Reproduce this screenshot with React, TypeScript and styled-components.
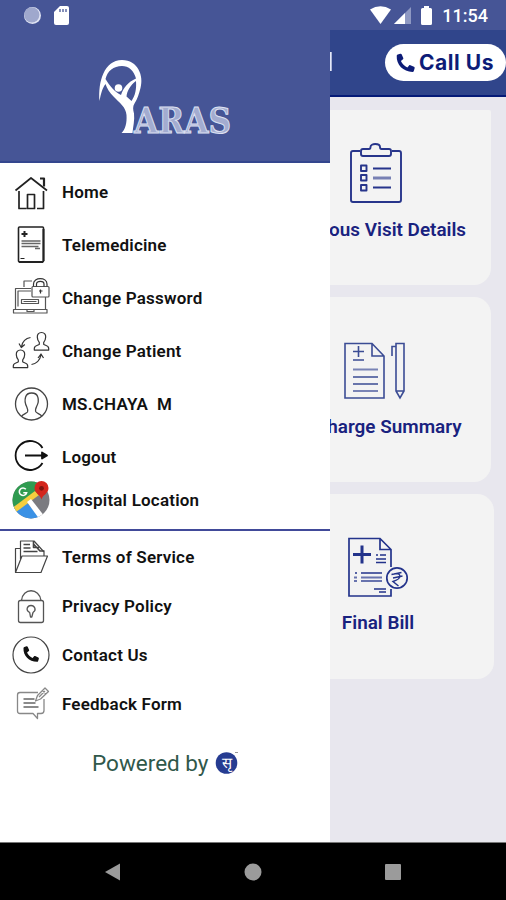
import React from "react";
import styled, { createGlobalStyle } from "styled-components";

const Global = createGlobalStyle`
  * { box-sizing: border-box; }
  body { margin: 0; background: #e8e7ee; font-family: Roboto, "Liberation Sans", sans-serif; }
  svg { display: block; flex: none; }
`;

const Screen = styled.div`
  width: 506px;
  height: 900px;
  display: flex;
  flex-direction: column;
  overflow: hidden;
  background: #e8e7ee;
`;

const StatusBar = styled.header`
  height: 30px;
  flex: none;
  display: flex;
  justify-content: space-between;
  align-items: center;
  padding: 0 18px 0 23px;
  background: #465596;
  color: #fff;
`;

const StatusGroup = styled.div<{ $gap: number }>`
  display: flex;
  align-items: center;
  gap: ${(p) => p.$gap}px;
`;

const Clock = styled.span`
  font-size: 18px;
  line-height: 30px;
  font-weight: 500;
  margin: 1px 0 0 3px;
`;

const Body = styled.div`
  position: relative;
  flex: 1;
  display: flex;
  flex-direction: column;
  overflow: hidden;
`;

const AppBar = styled.div`
  height: 67px;
  flex: none;
  display: flex;
  align-items: center;
  justify-content: flex-end;
  gap: 52px;
  background: #30458b;
  border-bottom: 2px solid #051a78;
`;

const AppTitle = styled.h1`
  margin: 0;
  font-size: 25px;
  font-weight: 500;
  color: #e4e8f8;
  will-change: transform;
`;

const CallButton = styled.button`
  display: flex;
  align-items: center;
  gap: 4px;
  width: 121px;
  height: 37px;
  padding: 0 0 0 10px;
  border: 0;
  border-radius: 19px;
  background: #fff;
  color: #0d1c77;
  font: 700 21px Inter, sans-serif;
  letter-spacing: 0.55px;
  white-space: nowrap;
`;

const Cards = styled.main`
  display: flex;
  flex-direction: column;
  align-items: flex-end;
  gap: 12px;
  padding: 13px 12px 0 0;
`;

const Card = styled.section<{ $kind: "top" | "middle" | "last" }>`
  width: 230px;
  height: ${(p) => (p.$kind === "top" ? 175 : 185)}px;
  margin-right: ${(p) => (p.$kind === "last" ? 0 : 3)}px;
  display: flex;
  flex-direction: column;
  align-items: center;
  padding: ${(p) => ({ top: "32px 0 0", middle: "44px 0 0", last: "43px 2px 0 0" })[p.$kind]};
  border-radius: ${(p) => (p.$kind === "top" ? "2px 2px 17px 17px" : "17px")};
  background: #f3f3f3;
`;

const CardLabel = styled.div`
  margin-top: 14px;
  font-size: 18.9px;
  line-height: 24px;
  font-weight: 600;
  color: #19227f;
  white-space: nowrap;
`;

const Drawer = styled.aside`
  position: absolute;
  inset: 0 auto 0 0;
  width: 329.5px;
  background: #fff;
`;

const Brand = styled.div`
  height: 133px;
  padding: 28px 0 0 96px;
  background: #465596;
  border-bottom: 2px solid #34468e;
`;

const Menu = styled.nav<{ $divided?: boolean }>`
  display: flex;
  flex-direction: column;
  padding: ${(p) => (p.$divided ? "1px 0 0" : "2px 0 13px")};
  border-top: ${(p) => (p.$divided ? "2px solid #414a99" : "0")};
`;

const Item = styled.a<{ $h: number }>`
  height: ${(p) => p.$h}px;
  display: flex;
  align-items: center;
  gap: 11px;
  padding-left: 11px;
  color: #111;
  font-size: 17px;
  font-weight: 600;
  letter-spacing: 0.2px;
  white-space: pre;
`;

const Powered = styled.footer`
  display: flex;
  align-items: center;
  gap: 6px;
  padding: 21px 0 0 92px;
  color: #30584a;
  font-size: 22.500px;
  line-height: 28px;
`;

const NavBar = styled.footer`
  height: 58px;
  flex: none;
  display: grid;
  grid-template-columns: repeat(3, 140px);
  justify-content: center;
  justify-items: center;
  align-items: center;
  background: #000;
  border-top: 1px solid #777;
`;

const Line = ({ children, w = 1.3, c = "#222" }: { children: React.ReactNode; w?: number; c?: string }) => (
  <svg width="40" height="40" viewBox="0 0 40 40" fill="none" stroke={c} strokeWidth={w} strokeLinejoin="round">
    {children}
  </svg>
);

const HANDSET =
  "M3 1.2 5.8.3c.7-.2 1.2.1 1.5.7l1.800 4c.2.6.1 1-.3 1.400L6.500 8.300c1.400 3.200 3.900 5.700 7.100 7.200l1.900-2.300c.4-.5.9-.6 1.400-.3l4 1.800c.6.3.9.8.7 1.500l-.9 3c-.2.7-.7 1.100-1.400 1.100C9 20.300 1.300 12.500 1.900 2.600 1.900 1.900 2.300 1.400 3 1.200Z";

const BUST =
  "M7 0c3 0 4.300 2 4.200 4.600-.1 2.300-.8 4-2 5.200v2.100c1.500 1.200 5 1 5 4v1.700H-.2v-1.700c0-3 3.500-2.800 5-4V9.800c-1.200-1.200-1.900-2.900-2-5.200C2.700 2 4 0 7 0Z";

const icons = {
  home: (
    <Line w={1.7}>
      <path d="M4.500 18.500 20 6 36 18.500M8 19v17.500h7.500M26 36.500h6.500V19M16.500 36.500V22.500h7v14Z" />
      <path d="M29 6.500h4v8" strokeWidth="2.200" />
    </Line>
  ),
  tele: (
    <Line w={1.6}>
      <rect x="7.500" y="2" width="25" height="35" rx="1" />
      <path d="M32.500 4v32M8 37h24" strokeWidth="2" />
      <path d="M10.500 9h6M13.500 6v6" strokeWidth="2" />
      <path d="M10.500 16h19M10.500 18.500h19M10.500 21.500h17M24 23.500h5" stroke="#666" />
      <path d="M9.500 33.500h4" strokeWidth="1" />
    </Line>
  ),
  password: (
    <Line w={1.2} c="#555">
      <path d="M20 10.500H4.500v21h30V19M7 28.500V13h13M2.500 31.500h33.500v3.500H2.500ZM16 32v1.500h7V32M13 9V3h8" />
      <path d="M10.500 21.500h17v4h-17ZM12.500 23.500h13" />
      <rect x="21" y="8.500" width="17" height="10.500" rx="1" fill="#fff" />
      <path d="M22.500 8.500V6c0-7.200 13.500-7.200 13.500 0v2.500M25.500 8.500V6c0-3.500 7.500-3.500 7.500 0v2.500M29.500 11.500v4M28 13h3.500" stroke="#333" />
    </Line>
  ),
  patient: (
    <Line w={1.2} c="#333">
      <g transform="translate(2.500 19)"><path d={BUST} /></g>
      <g transform="translate(23.500 1.500)"><path d={BUST} /></g>
      <path d="M19.500 6.500c-5 .8-8 4-9 9M8 12.500l2.300 4 3.500-3M20.500 33.500c5-1 8.500-4.500 9.500-9.500M27 27l3-4 2.500 4" />
    </Line>
  ),
  user: (
    <Line c="#444">
      <circle cx="20.500" cy="20" r="16" />
      <path d="M10.500 32.500c1.500-2.500 5-3 6-4.500.7-1.500.2-3-.7-5-2.300-4.500-2-7.500-1.200-10 .8-2.700 3-4 6-4s5.500 1.500 6.200 4c.8 2.500.7 6-1.200 9.500-1 2-1.500 4-.6 5.500 1 1.500 4.500 2 6 4.500" />
    </Line>
  ),
  logout: (
    <Line w={1.8} c="#111">
      <path d="M31.500 11A14.500 14.500 0 1 0 31.500 26M14 18.500h21" />
      <path d="m31 15.500 5 3-5 3Z" fill="#111" />
    </Line>
  ),
  map: (
    <svg width="40" height="40" viewBox="0 0 40 40">
      <defs><clipPath id="disc"><circle cx="20" cy="20" r="18.500" /></clipPath></defs>
      <g clipPath="url(#disc)">
        <path d="M0 0h40v40H0Z" fill="#7b7b80" />
        <path d="M0 0h28v12L0 32Z" fill="#2f9b50" />
        <path d="m0 28 14-7 18 19H0Z" fill="#3a91e5" />
        <path d="m0 29 24-18 4 4L1 35Z" fill="#f5ce3e" />
        <path d="m16 22 4-3 14 18-5 3Z" fill="#fff" />
      </g>
      <path d="M14.800 9.300a3.700 3.700 0 1 0 .8 3.400h-3.300" fill="none" stroke="#fff" strokeWidth="1.600" />
      <path d="M30.500 19.500c-1-4.500-7-6-7-11.500a7 7 0 0 1 14 0c0 5.500-6 7-7 11.500Z" fill="#d3251c" />
      <circle cx="30.500" cy="8.300" r="2.400" fill="#7e1410" />
    </svg>
  ),
  folder: (
    <Line c="#444" w={1.2}>
      <path d="M4.500 35.500V11.500h5M4.500 35.500 11 19h25.500l-6.500 16.500H6ZM9.500 22V4H23l10 11v4" />
      <path d="M22.500 4v6.500h5.500M22.500 7l6.500 7h4.500M12.500 7.500h6.500M12.500 11h7M12.500 14.500h14" strokeWidth="1.600" />
    </Line>
  ),
  lock: (
    <Line c="#555">
      <rect x="7.500" y="14.500" width="25" height="22" rx="2" />
      <path d="M10.500 14.500C11.500 1.500 28.500 1.500 30 14.500" />
      <path d="M18.700 26.500C14 24 16.500 19.500 20 19.500s6 4.500 2 7L20.800 31h-1.300Z" />
    </Line>
  ),
  contact: (
    <Line c="#444" w={1.2}>
      <circle cx="20" cy="20" r="18" />
      <g transform="translate(11 11) scale(.78)"><path d={HANDSET} fill="#111" stroke="none" /></g>
    </Line>
  ),
  feedback: (
    <Line c="#888">
      <path d="M27 8.500H9Q6.500 8.500 6.500 11v16Q6.500 29.500 9 29.500h13l4.500 5v-5h3.500q3 0 3-3V15" />
      <path d="M12.500 15h11M12.500 19h12M12.500 23h15" stroke="#666" />
      <path d="m24.500 17 2-5.500L34 4l3.500 3.500-8 7.500ZM31.500 6.500l3 3M28 13l6-6" />
    </Line>
  ),
};

const primary: [keyof typeof icons, string, number][] = [
  ["home", "Home", 53],
  ["tele", "Telemedicine", 53],
  ["password", "Change Password", 53],
  ["patient", "Change Patient", 53],
  ["user", "MS.CHAYA  M", 53],
  ["logout", "Logout", 53],
  ["map", "Hospital Location", 33],
];

const secondary: [keyof typeof icons, string][] = [
  ["folder", "Terms of Service"],
  ["lock", "Privacy Policy"],
  ["contact", "Contact Us"],
  ["feedback", "Feedback Form"],
];

const Logo = () => (
  <svg width="140" height="80" viewBox="96 58 140 80">
    <path
      fillRule="evenodd"
      d="M99.500 101C98 82 104 60 122 60c16 0 22 16 18.500 28-1.500 6-3 11-6 15.500-2 3-1.500 6-.5 10 .8 7-1 13-1.500 19.500h-11c4-4 5.500-10 5-18-.5-8-7-12-13-18.500-4-4-6.500-8-8-12.500-3 4-4.500 9-6 17ZM105.500 79c4 7 9.500 13 15.500 16 2-7 7-13 15-16.500-2-8-7.500-12.500-14-12.500-8.500 0-14.500 5-16.500 13ZM136 81c-5.500 4-9 10-9.500 15.500l5 4.500c4-6 5-12 4.500-20Z"
      fill="#fff"
    />
    <circle cx="118.500" cy="88" r="3.800" fill="#fff" />
    <text
      x="134" y="133" textLength="97" lengthAdjust="spacingAndGlyphs"
      fontFamily="DejaVu Serif" fontWeight="700" fontSize="36"
      fill="#a3acd0" stroke="#dde1f2" strokeWidth="1"
    >ARAS</text>
  </svg>
);

const ClipboardArt = () => (
  <svg width="54" height="62" viewBox="0 0 54 62" fill="none" stroke="#27358b" strokeWidth="1.900" strokeLinejoin="round">
    <path d="M11 9H4q-2 0-2 2v47q0 2 2 2h46q2 0 2-2V11q0-2-2-2h-7" />
    <path d="M14 7h6q1.500 0 1.500-2c0-4 9.500-4 9.500 0q0 2 1.500 2H40q2 0 2 2v3q0 2-2 2H14q-2 0-2-2V9q0-2 2-2Z" />
    <path d="M12 23.500h5.500V29H12ZM12 33h5.500v5.500H12ZM12 43h5.500v5.500H12ZM24 26.500h18M24 45.500h18" />
    <path d="M24 36h18" stroke="#7881b4" strokeWidth="3" />
  </svg>
);

const SummaryArt = () => (
  <svg width="64" height="60" viewBox="1 0 64 60" fill="none" stroke="#3b4c94" strokeWidth="1.600">
    <path d="M2 2.500h27L41 15v42H2ZM29 2.500V15h12M10 10.500h11M15.500 5v11M10 19h11M10 36h25M10 43h25" />
    <path d="M10 28.500h25M10 50h25" stroke="#7983b5" strokeWidth="2" />
    <path d="M53 2.500h8V50l-4 7-4-7ZM53 50h8M53 5.500h-4V15" />
  </svg>
);

const BillArt = () => (
  <svg width="62" height="60" viewBox="0 0 62 60" fill="none" stroke="#23338b" strokeWidth="1.700">
    <path d="M44 30V12.500L33 1.500H2V59h42v-7M33 1.500v11h11" />
    <path d="M6 17.500h18M15 8.500v18" strokeWidth="3" />
    <path d="M29 18h2M33 18h6M29 22h10M29 25.500h10M8 36h2M14 36h21M27 52h12M32 55h7" />
    <path d="M7 40.500h3M14 40.500h21M7 44h3M14 44h21" stroke="#6873ae" strokeWidth="2" />
    <circle cx="50" cy="41" r="10.200" fill="#f3f3f3" />
    <path d="m44.500 37.500 10-2M46 41l9.500-2M47 37c7-2 9 4.500-1 7.500l5.500 4.500" strokeWidth="1.400" />
  </svg>
);

export default function App() {
  return (
    <>
      <Global />
      <Screen>
        <StatusBar>
          <StatusGroup $gap={12}>
            <svg width="19" height="19" viewBox="0 0 19 19">
              <circle cx="9.500" cy="9.500" r="8.500" fill="#dfe3f3" />
              <circle cx="8.800" cy="8.800" r="7.600" fill="#9fa8cd" />
            </svg>
            <svg width="15" height="19" viewBox="0 0 15 19">
              <path d="M6 0h7q2 0 2 2v15q0 2-2 2H2q-2 0-2-2V6Z" fill="#fff" />
              <path d="M6 3v3M9 3v3M12 3v3" stroke="#465596" strokeWidth="1.300" />
            </svg>
          </StatusGroup>
          <StatusGroup $gap={3}>
            <svg width="21" height="18" viewBox="0 0 21 18">
              <path d="M0 3.500Q10.500-3 21 3.500L10.500 18Z" fill="#fff" />
            </svg>
            <svg width="17" height="17" viewBox="0 0 17 17">
              <path d="M17 0v17H0Z" fill="#8e98c2" />
              <path d="M11 6v11H0Z" fill="#fff" />
            </svg>
            <svg width="22" height="19" viewBox="0 0 22 19">
              <path d="M10 2V0h5v2h1.500Q18 2 18 3.500v14q0 1.500-1.500 1.500h-8Q7 19 7 17.500v-14Q7 2 8.500 2Z" fill="#fff" />
            </svg>
            <Clock>11:54</Clock>
          </StatusGroup>
        </StatusBar>
        <Body>
          <AppBar>
            <AppTitle>Hospital</AppTitle>
            <CallButton>
              <svg width="20" height="20" viewBox="0 0 22 21"><path d={HANDSET} fill="#0d1c77" /></svg>
              Call Us
            </CallButton>
          </AppBar>
          <Cards>
            <Card $kind="top">
              <ClipboardArt />
              <CardLabel>Previous Visit Details</CardLabel>
            </Card>
            <Card $kind="middle">
              <SummaryArt />
              <CardLabel>Discharge Summary</CardLabel>
            </Card>
            <Card $kind="last">
              <BillArt />
              <CardLabel>Final Bill</CardLabel>
            </Card>
          </Cards>
          <Drawer>
            <Brand><Logo /></Brand>
            <Menu>
              {primary.map(([icon, label, h]) => (
                <Item key={label} $h={h}>{icons[icon]}{label}</Item>
              ))}
            </Menu>
            <Menu $divided>
              {secondary.map(([icon, label]) => (
                <Item key={label} $h={49}>{icons[icon]}{label}</Item>
              ))}
            </Menu>
            <Powered>
              Powered by
              <svg width="24" height="24" viewBox="0 0 24 24">
                <circle cx="11.500" cy="12" r="10.800" fill="#263c91" />
                <text x="11.500" y="16.500" textAnchor="middle" fontSize="15" fill="#fff">सृ</text>
                <path d="M20 1.500h3" stroke="#999" />
              </svg>
            </Powered>
          </Drawer>
        </Body>
        <NavBar>
          <svg width="18" height="18" viewBox="0 0 18 18"><path d="M1 9 16 .5v17Z" fill="#9b9b9b" /></svg>
          <svg width="18" height="18" viewBox="0 0 18 18"><circle cx="9" cy="9" r="8.500" fill="#9b9b9b" /></svg>
          <svg width="16" height="16" viewBox="0 0 16 16"><rect width="16" height="16" rx="1" fill="#9b9b9b" /></svg>
        </NavBar>
      </Screen>
    </>
  );
}
